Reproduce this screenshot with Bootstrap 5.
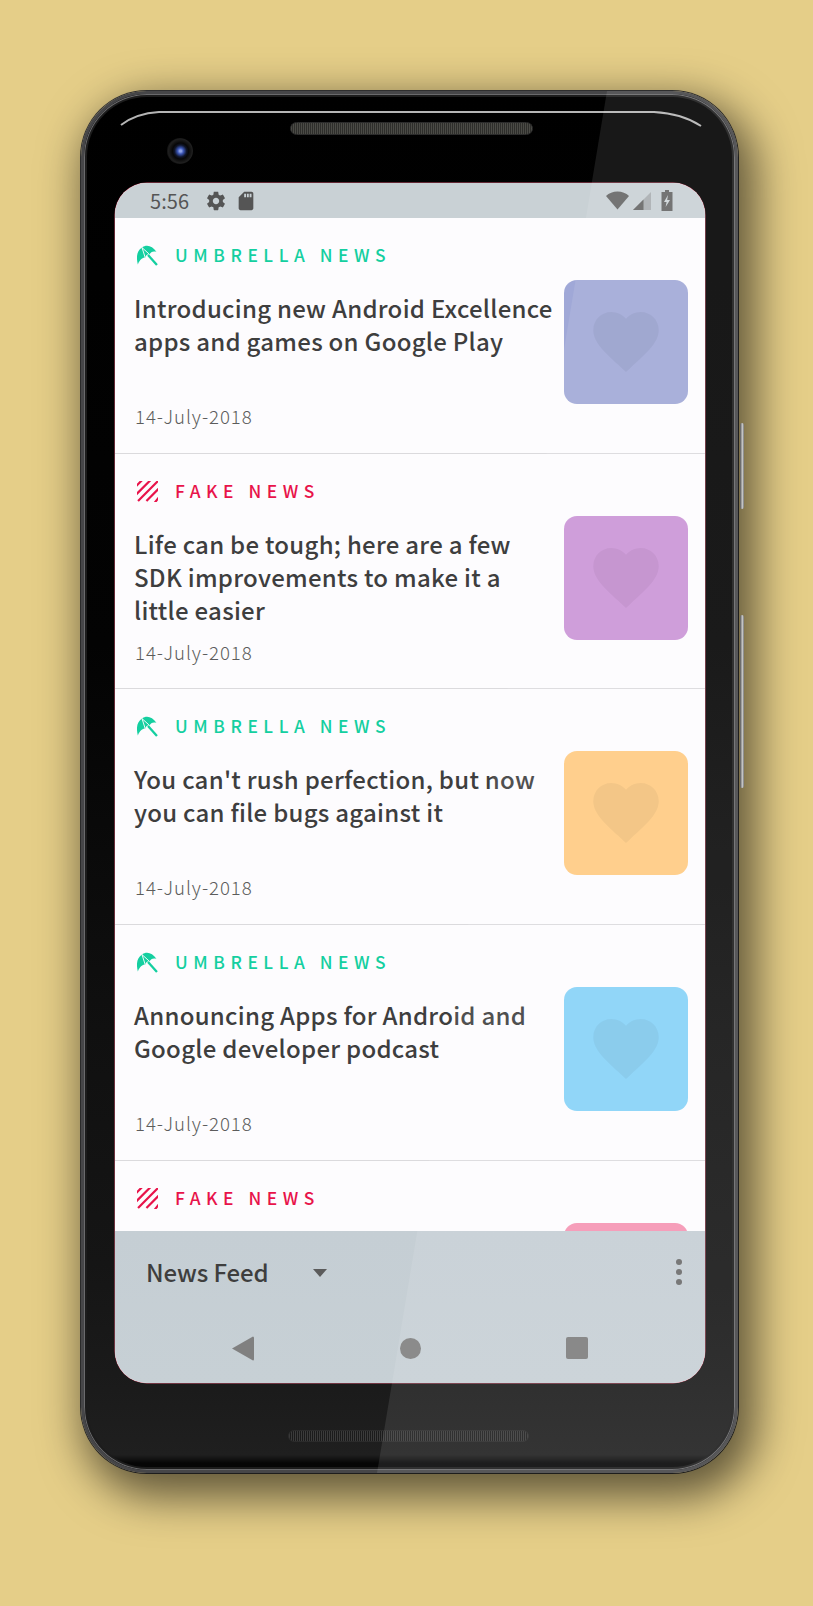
<!DOCTYPE html>
<html lang="en">
<head>
<meta charset="utf-8">
<title>News Feed</title>
<link rel="stylesheet" href="https://cdn.jsdelivr.net/npm/bootstrap@5.3.0/dist/css/bootstrap.min.css">
<style>
html,body{height:100%;margin:0}
body{background:#e5ce88;font-family:"Noto Sans CJK JP","Noto Sans",sans-serif;overflow:hidden}
.stage{width:813px;height:1606px;padding:91px 0 0 81px}
.device{position:relative;width:657px;height:1382px;border-radius:66px;padding:89px 30px 0 31px;
 background:linear-gradient(180deg,#000 0,#030303 40%,#101010 68%,#151515 85%,#1a1a1a 93%,#1f1f1f 98.9%,#060606 99.5%);
 border:3px solid #464648;box-shadow:10px 16px 44px 8px rgba(0,0,0,.58),0 0 0 1px #3a3a3a,inset 0 0 0 1px #6a6a6c,inset 0 0 0 3px #1c1c1c}
.glare{position:absolute;inset:-3px;border-radius:66px;background:rgba(255,255,255,.095);clip-path:polygon(526px 0,100% 0,100% 100%,296px 100%);pointer-events:none;z-index:5}
.rim{position:absolute;left:0;top:0;pointer-events:none}
.earpiece,.speaker{position:absolute;border-radius:7px;border:1.5px solid #2b2b2b;
 background:repeating-linear-gradient(90deg,#4b4b46 0 1px,#2e2e2b 1px 2px)}
.earpiece{left:206px;top:28px;width:243px;height:13px}
.speaker{left:204px;top:1336px;width:241px;height:12px;background:repeating-linear-gradient(90deg,#3b3b3b 0 1px,#1b1b1b 1px 2px)}
.lens{position:absolute;left:83px;top:44px;width:26px;height:26px;border-radius:50%;background:radial-gradient(circle at 52% 50%,#8fa3e6 0 1px,#3a55b5 3px,#10162a 6px,#070707 8px,#1f1f1f 12px,#161616 13px)}
.sidekey{position:absolute;left:656px;width:4px;border-radius:2px;background:linear-gradient(90deg,#555,#c8c8c8 60%,#777)}
.key-a{top:329px;height:86px}
.key-b{top:521px;height:173px}
.screen{width:590px;height:1200px;border-radius:32px;overflow:hidden;background:#fdfcfe;display:flex;flex-direction:column;box-shadow:0 0 0 .5px #c8536a}
.statusbar{height:35px;flex:none;background:#c9d1d5;color:#555;padding:0 32px 0 35px}
.clock{font-size:20px;line-height:1;width:39px;margin-right:16px;letter-spacing:.1px}
.feed{flex:1 1 auto;overflow:hidden;min-height:0}
.news-entry{height:235.7px;padding:0 17.5px 0 19px;border-bottom:1px solid #dbdadd}
.source-line{height:62px;padding-top:24px;line-height:26px}
.source-logo{width:21px;height:21px;margin:3px 17px 0 3px;flex:none}
.source-name{font-size:17.4px;letter-spacing:5.55px;font-weight:500;line-height:26px}
.umbrella{color:#14cfa0}
.fake{color:#e8134a}
.entry-body{height:149px}
.entry-text{padding-top:11px}
.entry-title{font-size:24px;font-weight:500;line-height:33px;color:#3e3e3e;margin:0;letter-spacing:.27px}
.entry-date{font-size:18.6px;line-height:26px;color:#5c5c5c;margin:0 0 0 1px;letter-spacing:.95px;font-weight:300}
.thumb{width:124px;height:124px;flex:none;border-radius:13px;display:flex;align-items:center;justify-content:center}
.th1{background:#a0a8d7}.th2{background:#cb94d7}.th3{background:#ffcb82}.th4{background:#86d2f8}.th5{background:#f594b3}
.heart{width:66px;height:60px;fill:rgba(0,0,0,.05)}
.bottombar{height:152px;flex:none;background:linear-gradient(180deg,#c5ced4 0,#c7d0d5 100%);z-index:2}
.toolbar{height:82px;padding:0 23px 0 31px}
.toolbar-label{font-size:24px;color:#3e3e3e;line-height:1;width:167px;font-weight:500;letter-spacing:-.1px}
.caret-down{width:0;height:0;border-left:7.5px solid transparent;border-right:7.5px solid transparent;border-top:8px solid #5b5b5b;margin-top:2px}
.dots{gap:3.5px}
.dots i{display:block;width:6.5px;height:6.5px;border-radius:50%;background:#6a6a6a}
.navkeys{height:70px;padding:0 117px 0 117px}
.nav-square{width:22px;height:22px;border-radius:2px;background:#7d7d7d}
.nav-circle{width:21px;height:21px;border-radius:50%;background:#7f7f7f}
</style>
</head>
<body>
<div class="stage">
 <div class="device">
  <svg class="rim" width="651" height="1376" viewBox="0 0 651 1376" fill="none">
   <path d="M37 31 C46 24 58 19 75 18 H570 C590 19 605 24 617 32" stroke="#b5b5b5" stroke-width="2"/>
  </svg>
  <div class="earpiece"></div>
  <div class="lens"></div>
  <div class="sidekey key-a"></div>
  <div class="sidekey key-b"></div>
  <div class="screen">
   <div class="statusbar d-flex align-items-center">
    <span class="clock">5:56</span>
    <svg width="22" height="22" viewBox="0 0 24 24" fill="#555" class="me-1"><path d="M19.43 12.98c.04-.32.07-.64.07-.98s-.03-.66-.07-.98l2.11-1.65c.19-.15.24-.42.12-.64l-2-3.46c-.12-.22-.39-.3-.61-.22l-2.49 1c-.52-.4-1.08-.73-1.69-.98l-.38-2.65C14.46 2.18 14.25 2 14 2h-4c-.25 0-.46.18-.49.42l-.38 2.65c-.61.25-1.17.59-1.69.98l-2.49-1c-.23-.09-.49 0-.61.22l-2 3.46c-.13.22-.07.49.12.64l2.11 1.65c-.04.32-.07.65-.07.98s.03.66.07.98l-2.11 1.65c-.19.15-.24.42-.12.64l2 3.46c.12.22.39.3.61.22l2.49-1c.52.4 1.08.73 1.69.98l.38 2.65c.03.24.24.42.49.42h4c.25 0 .46-.18.49-.42l.38-2.65c.61-.25 1.17-.59 1.69-.98l2.49 1c.23.09.49 0 .61-.22l2-3.46c.12-.22.07-.49-.12-.64l-2.11-1.65zM12 15.5c-1.93 0-3.5-1.57-3.5-3.5s1.57-3.5 3.5-3.5 3.5 1.57 3.5 3.5-1.57 3.5-3.5 3.5z"/></svg>
    <svg width="22" height="22" viewBox="0 0 24 24" fill="#555" class="ms-1"><path d="M18 2h-8L4.02 8 4 20c0 1.1.9 2 2 2h12c1.1 0 2-.9 2-2V4c0-1.1-.9-2-2-2zm-6 6h-2V4h2v4zm3 0h-2V4h2v4zm3 0h-2V4h2v4z"/></svg>
    <svg class="ms-auto" width="23" height="19" viewBox="0 0 23 19" fill="#666"><path d="M11.5 18.5 0 5C3 2 7 .5 11.5 .5S20 2 23 5Z"/></svg>
    <svg class="ms-1" width="18" height="18" viewBox="0 0 18 18"><path d="M18 0V18H0Z" fill="#a9aeb1"/><path d="M10.5 7.5V18H0Z" fill="#666"/></svg>
    <svg style="margin-left:10px" width="12" height="21" viewBox="0 0 12 21"><path d="M4 0H8V2H11.5V21H.5V2H4Z" fill="#666"/><path d="M7 5 3 12H5.6L4.6 17 9 10H6.2Z" fill="#cfd6d9"/></svg>
   </div>
   <div class="feed">
    <article class="news-entry">
     <div class="source-line d-flex align-items-start">
      <svg class="source-logo umbrella" viewBox="0 0 20 20" fill="currentColor"><path d="M.8 18.5C-1 11 0 5.5 4.5 2.5 9-.8 14.500 .5 18.500 6.500 15.500 5.500 13 6.500 12 9 10 8.500 8 10 8 12 5 12 2.500 14.500 .8 18.500Z"/><path d="M4.800 2.500 7.800 12M4.800 2.500 12 9" stroke="#fdfcfe" stroke-width=".9"/><path d="M10.500 9.500 19 19" stroke="currentColor" stroke-width="2.2"/></svg>
      <span class="source-name umbrella">UMBRELLA NEWS</span>
     </div>
     <div class="entry-body d-flex">
      <div class="entry-text flex-grow-1 d-flex flex-column justify-content-between">
       <h2 class="entry-title">Introducing new Android Excellence<br>apps and games on Google Play</h2>
       <p class="entry-date">14-July-2018</p>
      </div>
      <div class="thumb th1"><svg class="heart" viewBox="0 0 24 22"><path d="M12 22 10.3 20.4C4.1 14.8 0 11.1 0 6.6 0 2.9 2.9 0 6.6 0 8.7 0 10.7 1 12 2.5 13.3 1 15.3 0 17.4 0 21.1 0 24 2.9 24 6.6 24 11.1 19.9 14.8 13.7 20.4Z"/></svg></div>
     </div>
    </article>
    <article class="news-entry">
     <div class="source-line d-flex align-items-start">
      <svg class="source-logo fake" viewBox="0 0 20 20" fill="none" stroke="currentColor" stroke-width="2.1"><defs><clipPath id="sq"><rect width="20" height="20"/></clipPath></defs><g clip-path="url(#sq)"><path d="M-3 7 7-3M-3 15 15-3M1 19 21-1M9 19 23 5M15 23 23 13"/></g></svg>
      <span class="source-name fake">FAKE NEWS</span>
     </div>
     <div class="entry-body d-flex">
      <div class="entry-text flex-grow-1 d-flex flex-column justify-content-between">
       <h2 class="entry-title">Life can be tough; here are a few<br>SDK improvements to make it a<br>little easier</h2>
       <p class="entry-date">14-July-2018</p>
      </div>
      <div class="thumb th2"><svg class="heart" viewBox="0 0 24 22"><path d="M12 22 10.3 20.4C4.1 14.8 0 11.1 0 6.6 0 2.9 2.9 0 6.6 0 8.7 0 10.7 1 12 2.5 13.3 1 15.3 0 17.4 0 21.1 0 24 2.9 24 6.6 24 11.1 19.9 14.8 13.7 20.4Z"/></svg></div>
     </div>
    </article>
    <article class="news-entry">
     <div class="source-line d-flex align-items-start">
      <svg class="source-logo umbrella" viewBox="0 0 20 20" fill="currentColor"><path d="M.8 18.5C-1 11 0 5.5 4.5 2.5 9-.8 14.500 .5 18.500 6.500 15.500 5.500 13 6.500 12 9 10 8.500 8 10 8 12 5 12 2.500 14.500 .8 18.500Z"/><path d="M4.800 2.500 7.800 12M4.800 2.500 12 9" stroke="#fdfcfe" stroke-width=".9"/><path d="M10.500 9.500 19 19" stroke="currentColor" stroke-width="2.2"/></svg>
      <span class="source-name umbrella">UMBRELLA NEWS</span>
     </div>
     <div class="entry-body d-flex">
      <div class="entry-text flex-grow-1 d-flex flex-column justify-content-between">
       <h2 class="entry-title">You can't rush perfection, but now<br>you can file bugs against it</h2>
       <p class="entry-date">14-July-2018</p>
      </div>
      <div class="thumb th3"><svg class="heart" viewBox="0 0 24 22"><path d="M12 22 10.3 20.4C4.1 14.8 0 11.1 0 6.6 0 2.9 2.9 0 6.6 0 8.7 0 10.7 1 12 2.5 13.3 1 15.3 0 17.4 0 21.1 0 24 2.9 24 6.6 24 11.1 19.9 14.8 13.7 20.4Z"/></svg></div>
     </div>
    </article>
    <article class="news-entry">
     <div class="source-line d-flex align-items-start">
      <svg class="source-logo umbrella" viewBox="0 0 20 20" fill="currentColor"><path d="M.8 18.5C-1 11 0 5.5 4.5 2.5 9-.8 14.500 .5 18.500 6.500 15.500 5.500 13 6.500 12 9 10 8.500 8 10 8 12 5 12 2.500 14.500 .8 18.500Z"/><path d="M4.800 2.500 7.800 12M4.800 2.500 12 9" stroke="#fdfcfe" stroke-width=".9"/><path d="M10.500 9.500 19 19" stroke="currentColor" stroke-width="2.2"/></svg>
      <span class="source-name umbrella">UMBRELLA NEWS</span>
     </div>
     <div class="entry-body d-flex">
      <div class="entry-text flex-grow-1 d-flex flex-column justify-content-between">
       <h2 class="entry-title">Announcing Apps for Android and<br>Google developer podcast</h2>
       <p class="entry-date">14-July-2018</p>
      </div>
      <div class="thumb th4"><svg class="heart" viewBox="0 0 24 22"><path d="M12 22 10.3 20.4C4.1 14.8 0 11.1 0 6.6 0 2.9 2.9 0 6.6 0 8.7 0 10.7 1 12 2.5 13.3 1 15.3 0 17.4 0 21.1 0 24 2.9 24 6.6 24 11.1 19.9 14.8 13.7 20.4Z"/></svg></div>
     </div>
    </article>
    <article class="news-entry">
     <div class="source-line d-flex align-items-start">
      <svg class="source-logo fake" viewBox="0 0 20 20" fill="none" stroke="currentColor" stroke-width="2.1"><g clip-path="url(#sq)"><path d="M-3 7 7-3M-3 15 15-3M1 19 21-1M9 19 23 5M15 23 23 13"/></g></svg>
      <span class="source-name fake">FAKE NEWS</span>
     </div>
     <div class="entry-body d-flex">
      <div class="flex-grow-1"></div>
      <div class="thumb th5"></div>
     </div>
    </article>
   </div>
   <div class="bottombar">
    <div class="toolbar d-flex align-items-center">
     <span class="toolbar-label">News Feed</span>
     <span class="caret-down"></span>
     <span class="dots d-flex flex-column ms-auto"><i></i><i></i><i></i></span>
    </div>
    <div class="navkeys d-flex align-items-center justify-content-between">
     <svg width="22" height="25" viewBox="0 0 22 25" fill="#808080"><path d="M21 0.5Q22 .5 22 2V23Q22 24.5 21 24.5L0 12.5Z"/></svg>
     <span class="nav-circle"></span>
     <span class="nav-square"></span>
    </div>
   </div>
  </div>
  <div class="speaker"></div>
  <div class="glare"></div>
 </div>
</div>
</body>
</html>
